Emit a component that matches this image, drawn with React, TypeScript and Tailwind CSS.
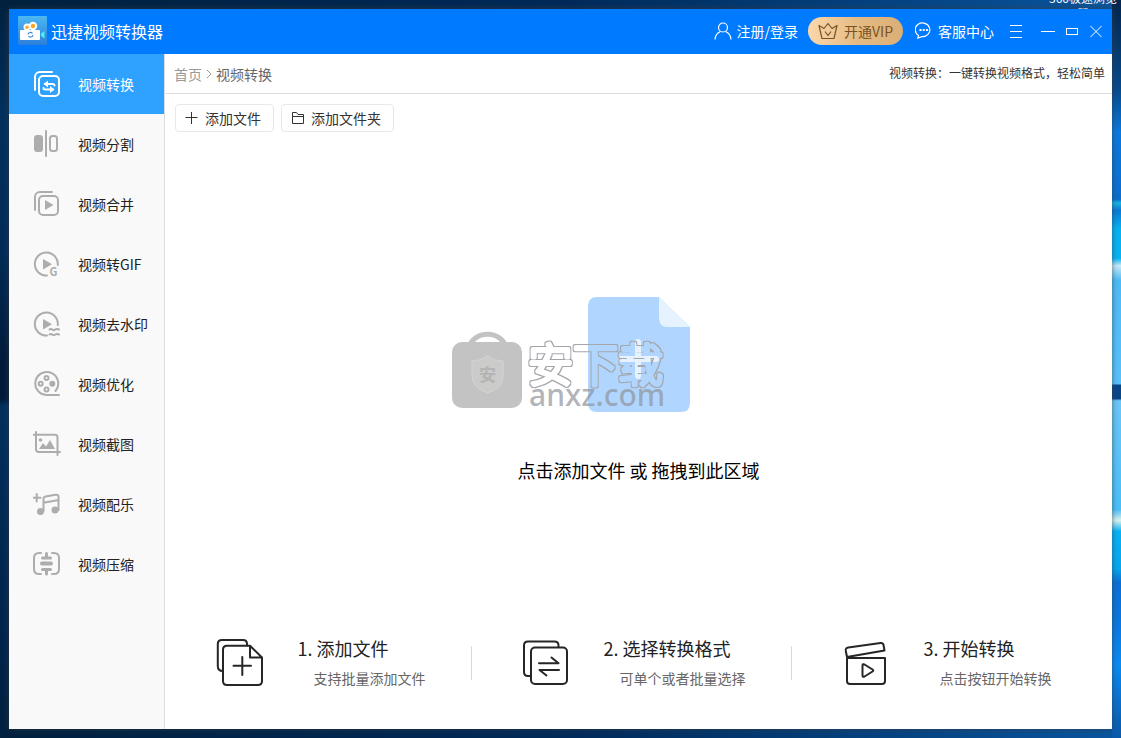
import { useState } from 'react';
import type { ReactNode } from 'react';

type NavItem = {
  label: string;
  icon: ReactNode;
};

const stackBack = <path d="M2 20V7a5 5 0 0 1 5-5h12" />;

const navItems: NavItem[] = [
  {
    label: '视频转换',
    icon: (
      <>
        {stackBack}
        <rect x="6" y="6" width="20" height="20" rx="4" />
        <path d="M12 14h7.500q2 0 2 1.500M20 19.500h-7.500q-2 0-2-1.500" />
        <path
          d="M10.500 14l4.500-3.500v7zM21.500 19.500l-4.500-3.500v7z"
          fill="currentColor"
          stroke="none"
        />
      </>
    ),
  },
  {
    label: '视频分割',
    icon: (
      <>
        <rect x="2" y="6" width="7" height="15" rx="2" fill="currentColor" />
        <path d="M13 1v25" />
        <rect x="17" y="6" width="7" height="15" rx="2.500" />
      </>
    ),
  },
  {
    label: '视频合并',
    icon: (
      <>
        {stackBack}
        <rect x="6" y="6" width="19" height="19" rx="4" />
        <path d="M12 10v10l8.500-5z" fill="currentColor" stroke="none" />
      </>
    ),
  },
  {
    label: '视频转GIF',
    icon: (
      <>
        <path d="M14 25.500A11.500 11.500 0 1 1 24.800 15" />
        <path d="M10 9v10.500l9-5.200z" fill="currentColor" stroke="none" />
        <text
          x="16.500"
          y="26"
          fontSize="11"
          fontWeight="700"
          fill="currentColor"
          stroke="none"
        >
          G
        </text>
      </>
    ),
  },
  {
    label: '视频去水印',
    icon: (
      <>
        <path d="M14 25.500A11.500 11.500 0 1 1 24.800 15" />
        <path d="M10 9v10.500l9-5.200z" fill="currentColor" stroke="none" />
        <path d="M16.500 19.500c2-2 3.500 1.500 5 .5s2.500-1.500 4.500-.5M16.500 24.500c2-2 3.500 1.500 5 .5s2.500-1.500 4.500-.5" />
      </>
    ),
  },
  {
    label: '视频优化',
    icon: (
      <>
        <path d="M26 25H13.500A11.500 11.500 0 1 1 22.500 21" />
        <circle cx="13.500" cy="8" r="2" />
        <circle cx="13.500" cy="19.500" r="2" />
        <circle cx="7.700" cy="13.700" r="2" />
        <circle cx="19.300" cy="13.700" r="2" fill="currentColor" />
      </>
    ),
  },
  {
    label: '视频截图',
    icon: (
      <>
        <path d="M3 2v17q0 3 3 3h21M0 4.700h22q2.500 0 2.500 2.500V25" />
        <circle cx="7.500" cy="10" r="1.800" fill="currentColor" stroke="none" />
        <path
          d="M6 19l4-6 3 3.500 4-6.500 5 9z"
          fill="currentColor"
          stroke="none"
        />
      </>
    ),
  },
  {
    label: '视频配乐',
    icon: (
      <>
        <path d="M3.700 4v7.500M0 7.700h7.500M10.500 21V9q0-2 2-2.400l10-1.800q3-.5 3 2V20M10.500 12.800l15-2.800" />
        <circle cx="7.500" cy="21.500" r="3.500" fill="currentColor" stroke="none" />
        <circle cx="22" cy="20" r="3.500" fill="currentColor" stroke="none" />
      </>
    ),
  },
  {
    label: '视频压缩',
    icon: (
      <>
        <path d="M8 3H6Q1 3 1 8v11q0 5 5 5h2M19 3h2q5 0 5 5v11q0 5-5 5h-2" />
        <path d="M9 13.500h9" strokeWidth="4" />
        <path d="M9.500 8h8M9.500 19.500h8M13.500 3.500V8M13.500 19.500V24" strokeWidth="3" />
      </>
    ),
  },
];

const steps = [
  {
    title: '1. 添加文件',
    text: '支持批量添加文件',
    icon: (
      <>
        <path d="M30 6.500V5q0-4-4-4H5Q.8 1 .8 5v22q0 5 5 5" />
        <path d="M33 6.800H10q-4 0-4 4V42q0 4 4 4h31q4 0 4-4V18.500zM33 6.800v11.700h12M25.300 18v18M16.500 26.800h17.500" />
      </>
    ),
  },
  {
    title: '2. 选择转换格式',
    text: '可单个或者批量选择',
    icon: (
      <>
        <path d="M35.500 8V6.500q0-4-4-4H5q-4 0-4 4V33q0 4 4 4h2" />
        <rect x="8" y="8.500" width="36" height="36.500" rx="4" />
        <path d="M16 24.200h19.500l-7-5.700M36 31H16.500l7 5.500" />
      </>
    ),
  },
  {
    title: '3. 开始转换',
    text: '点击按钮开始转换',
    icon: (
      <>
        <path d="M4 19h38v23q0 3-3 3H7q-3 0-3-3zM4 18L2.800 12q-.5-3 2.500-3.400L37.500 4q2.500-.3 3 2l1 5.500z" />
        <path d="M19.500 26.500q0-2 2-1l8 5q1.500 1 0 2l-8 5q-2 1-2-1z" />
      </>
    ),
  },
];

function AppLogo() {
  return (
    <svg className="h-[29px] w-[29px]" viewBox="0 0 29 29">
      <defs>
        <linearGradient id="logoBg" x1="0" y1="0" x2="0" y2="1">
          <stop offset="0" stopColor="#4cb8f0" />
          <stop offset="1" stopColor="#2c7fdb" />
        </linearGradient>
      </defs>
      <rect width="29" height="29" rx="1" fill="url(#logoBg)" />
      <circle cx="9" cy="11" r="3.500" fill="#fff" />
      <circle cx="15" cy="10" r="4.200" fill="#fff" />
      <circle cx="9" cy="11.200" r="1.700" fill="#f9a825" />
      <circle cx="15" cy="10" r="2.200" fill="#f9a825" />
      <rect x="2" y="14" width="20" height="10" rx="1" fill="#fff" />
      <path d="M23 17.500l3.500-2.500v7.500L23 20z" fill="#4df0e8" />
      <path
        d="M10 18.500a2.500 2.500 0 0 1 4.500-1M15 19a2.500 2.500 0 0 1-4.500 1"
        fill="none"
        stroke="#3c8ee0"
        strokeWidth="1.200"
      />
    </svg>
  );
}

function Header() {
  return (
    <header className="flex h-[45px] items-center bg-[#007aff] pb-0.5 pl-[9px] pr-2 text-sm text-white">
      <div className="flex items-center gap-1">
        <AppLogo />
        <h1 className="text-base">迅捷视频转换器</h1>
      </div>

      <div className="ml-auto flex items-center">
        <button className="flex items-center gap-1">
          <svg
            className="h-[18px] w-[18px]"
            viewBox="0 0 18 18"
            fill="none"
            stroke="currentColor"
            strokeWidth="1.200"
          >
            <circle cx="9" cy="5.500" r="4.500" />
            <path d="M1 17.500q.5-6 5.500-8M17 17.500q-.5-6-5.500-8" />
          </svg>
          注册/登录
        </button>

        <button className="ml-2.5 flex h-7 items-center gap-1.5 rounded-full bg-linear-to-r from-[#fad7ab] via-[#e6bc86] to-[#d9af76] pl-2.5 pr-[10px] text-[#7a5324]">
          <svg
            className="h-[18px] w-5"
            viewBox="0 0 20 18"
            fill="none"
            stroke="currentColor"
            strokeWidth="1.200"
            strokeLinejoin="round"
          >
            <path d="M1 3.500l5 3L10 1.500l4 5 5-3-3 13H4zM7 9.500l3 4 3-4" />
          </svg>
          开通VIP
        </button>

        <button className="ml-3 flex items-center gap-1.5">
          <svg
            className="h-[17px] w-[17px]"
            viewBox="0 0 17 17"
            fill="none"
            stroke="currentColor"
            strokeWidth="1.200"
          >
            <path d="M3.500 13.500A7.300 6.800 0 1 1 7 14.600L2.800 16z" />
            <path d="M4.500 8h2M7.700 8h2M10.900 8h2" strokeWidth="2" />
          </svg>
          客服中心
        </button>

        <div className="ml-[14px] flex items-center">
          <button aria-label="菜单">
            <svg className="h-4 w-4" viewBox="0 0 16 16" stroke="currentColor">
              <path d="M2 2.500h12M2 8.500h12M2 14.500h12" />
            </svg>
          </button>
          <button aria-label="最小化" className="ml-4">
            <svg className="h-4 w-4" viewBox="0 0 16 16" stroke="currentColor">
              <path d="M1 8.500h14" />
            </svg>
          </button>
          <button aria-label="最大化" className="ml-2">
            <svg
              className="h-4 w-4"
              viewBox="0 0 16 16"
              fill="none"
              stroke="currentColor"
            >
              <rect x="2.500" y="5.500" width="11" height="6" />
            </svg>
          </button>
          <button aria-label="关闭" className="ml-2">
            <svg className="h-4 w-4" viewBox="0 0 16 16" stroke="currentColor">
              <path d="M2.500 3l11 11M13.500 3l-11 11" />
            </svg>
          </button>
        </div>
      </div>
    </header>
  );
}

function Watermark() {
  return (
    <svg
      className="pointer-events-none absolute right-6 top-7 h-24 w-[216px]"
      viewBox="0 0 216 96"
    >
      <filter id="outline" x="-10%" y="-20%" width="120%" height="140%">
        <feMorphology in="SourceAlpha" operator="dilate" radius="1" result="outer" />
        <feFlood floodColor="#a3a6aa" />
        <feComposite in2="outer" operator="in" />
        <feComposite in2="SourceAlpha" operator="out" />
      </filter>
      <path
        d="M19 22a19 16.500 0 0 1 37 0"
        fill="none"
        stroke="#c3c3c3"
        strokeWidth="5"
      />
      <rect x="2" y="17" width="70" height="66" rx="10" fill="#c3c3c3" />
      <path
        d="M37.500 31q7 5 15.500 5v15q0 12-15.500 17Q22 63 22 51V36q8.500 0 15.500-5z"
        fill="#cbcbc9"
        stroke="#d4d4d2"
      />
      <text x="29" y="56" fontSize="17" fontWeight="700" fill="#b4b4b4">
        安
      </text>
      <text
        x="78"
        y="57"
        fontSize="45"
        fontWeight="300"
        stroke="#000"
        strokeWidth="4"
        strokeLinejoin="round"
        filter="url(#outline)"
      >
        安下载
      </text>
      <text
        x="79"
        y="81"
        fontSize="30"
        fontWeight="500"
        fill="#8f9499"
        fillOpacity="0.7"
        fontFamily="'Noto Sans', sans-serif"
      >
        anxz.com
      </text>
    </svg>
  );
}

function DropZone() {
  return (
    <button className="flex flex-1 flex-col items-center justify-center gap-11 pt-3 text-lg text-black">
      <span className="relative block">
        <svg className="h-[115px] w-[102px]" viewBox="0 0 102 115">
          <path
            d="M9 0h62l31 30v76q0 9-9 9H9q-9 0-9-9V9q0-9 9-9z"
            fill="#b0d6ff"
          />
          <path d="M71 0l31 30H80q-9 0-9-9z" fill="#e6f3ff" />
          <path
            d="M50 45v34M33 62h35"
            stroke="#e6f3ff"
            strokeWidth="6"
            strokeLinecap="round"
          />
        </svg>
        <Watermark />
      </span>
      <span>点击添加文件 或 拖拽到此区域</span>
    </button>
  );
}

function Steps() {
  return (
    <ol className="flex items-center justify-center pb-[39px]">
      {steps.map((step, i) => (
        <li key={step.title} className="flex shrink-0 items-center">
          {i > 0 && <span className="h-[34px] w-px bg-[#d9d9d9]" />}
          <div
            className={`flex items-center gap-[33px] pl-[51px] ${
              i === steps.length - 1 ? 'pr-[60px]' : 'pr-[45px]'
            }`}
          >
            <svg
              className="h-12 w-12 text-[#262626]"
              viewBox="0 0 48 48"
              fill="none"
              stroke="currentColor"
              strokeWidth="2"
              strokeLinecap="round"
              strokeLinejoin="round"
              overflow="visible"
            >
              {step.icon}
            </svg>
            <div className="pb-0.5">
              <h2 className="text-lg leading-6 text-[#222]">{step.title}</h2>
              <p className="mt-2 pl-4 text-sm text-[#666]">{step.text}</p>
            </div>
          </div>
        </li>
      ))}
    </ol>
  );
}

export default function App() {
  const [active, setActive] = useState(0);

  return (
    <div className="relative flex min-h-screen flex-col overflow-hidden bg-linear-to-r from-[#01213f] via-[#012a5a] to-[#0a56a0] p-[9px] font-['Noto_Sans_CJK_SC',sans-serif]">
      {/* desktop behind the window */}
      <div className="absolute inset-y-0 left-0 w-[9px] bg-[linear-gradient(#01213f,#02305e_15%,#022c58_34%,#011a3a_50%,#011a3a_54%,#02305e_55%,#01244c_87%,#01213f)]" />
      <div className="absolute inset-y-0 right-0 w-[9px] bg-[linear-gradient(#04264f,#064a8c_12%,#0a7ae0_18%,#0a6fd0_27%,#16b4e8_27.500%,#0a7ad8_28.500%,#06b4f5_31%,#06b4f5_35%,#c8ecfa_36%,#4cbcfa_38%,#58c2fc_52%,#08468a_52.200%,#08468a_54%,#6cc8fa_54.300%,#48c0fa_69%,#d8f4f0_70.500%,#06b4f8_72%,#06a8f0_77%,#0a70d8_79%,#0a78e0_84%,#0a8cf5_90%,#0a58a8)]" />
      <span className="absolute -top-2.5 right-0.5 w-[72px] text-center text-xs leading-[15px] text-white">
        360极速浏览器
      </span>

      <div className="relative flex flex-1 flex-col bg-white shadow-[0_0_6px_rgba(60,60,60,0.7)]">
        <Header />
        <div className="flex flex-1">
          <nav className="w-[156px] shrink-0 border-r border-[#dedede] bg-[#f9f9f9]">
            {navItems.map((item, i) => (
              <button
                key={item.label}
                onClick={() => setActive(i)}
                className={`flex h-[60px] w-full items-center gap-[17px] pl-6 text-sm ${
                  i === active ? 'bg-[#2fa2ff] text-white' : 'text-[#222]'
                }`}
              >
                <svg
                  className={`h-7 w-7 ${
                    i === active ? 'text-white' : 'text-[#adadad]'
                  }`}
                  viewBox="0 0 28 28"
                  fill="none"
                  stroke="currentColor"
                  strokeWidth="2"
                  strokeLinecap="round"
                  strokeLinejoin="round"
                >
                  {item.icon}
                </svg>
                {item.label}
              </button>
            ))}
          </nav>

          <main className="flex min-w-0 flex-1 flex-col">
            <div className="flex h-10 items-center justify-between border-b border-[#dedede] pl-[9px] pr-[7px]">
              <div className="flex items-center gap-1 text-sm">
                <a href="#" className="text-[#999]">
                  首页
                </a>
                <svg
                  className="h-2.5 w-1.5"
                  viewBox="0 0 6 10"
                  fill="none"
                  stroke="#999"
                >
                  <path d="M1 1l4 4-4 4" />
                </svg>
                <span className="text-[#666]">视频转换</span>
              </div>
              <p className="pb-0.5 text-xs text-[#333]">
                视频转换：一键转换视频格式，轻松简单
              </p>
            </div>

            <div className="flex gap-[7px] px-2.5 pt-2.5 text-sm text-[#333]">
              <button className="flex h-7 items-center gap-1.5 rounded border border-[#e8e8e8] pl-[9px] pr-3">
                <svg className="h-3.5 w-3.5" viewBox="0 0 14 14" stroke="currentColor">
                  <path d="M6.500 1v12M.5 6.500h12" />
                </svg>
                添加文件
              </button>
              <button className="flex h-7 items-center gap-1.5 rounded border border-[#e8e8e8] pl-[9px] pr-3">
                <svg
                  className="h-3.5 w-3.5"
                  viewBox="0 0 14 14"
                  fill="none"
                  stroke="currentColor"
                >
                  <path d="M1.500 12.500v-11h4l1.500 2h5.500v9zM1.500 5.500h11" />
                </svg>
                添加文件夹
              </button>
            </div>

            <DropZone />
            <Steps />
          </main>
        </div>
      </div>
    </div>
  );
}
